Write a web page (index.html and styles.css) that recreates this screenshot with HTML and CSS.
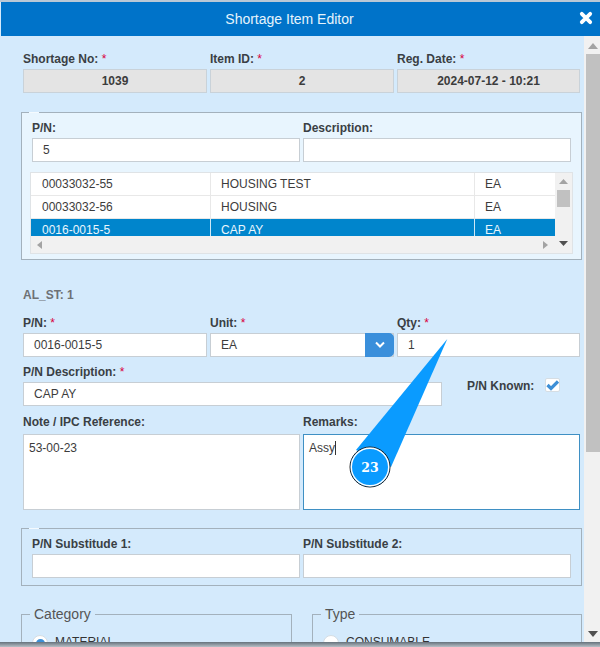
FILE: index.html
```html
<!DOCTYPE html>
<html lang="en">
<head>
<meta charset="utf-8">
<title>Shortage Item Editor</title>
<link rel="stylesheet" href="styles.css">
</head>
<body>
<div class="window">
  <header class="titlebar">
    <h1 class="title">Shortage Item Editor</h1>
    <svg class="close" width="16" height="16" viewBox="0 0 16 16"><path d="M3.800 3.800 L12.200 12.200 M12.200 3.800 L3.800 12.200" stroke="#fff" stroke-width="3.800" stroke-linecap="round"/></svg>
  </header>
  <div class="main">
    <div class="content">
      <div class="row row-three">
        <div><div class="label">Shortage No: <span class="req">*</span></div><div class="input readonly">1039</div></div>
        <div><div class="label">Item ID: <span class="req">*</span></div><div class="input readonly">2</div></div>
        <div><div class="label">Reg. Date: <span class="req">*</span></div><div class="input readonly">2024-07-12 - 10:21</div></div>
      </div>

      <section class="box box-light">
        <div class="row row-two">
          <div><div class="label">P/N:</div><div class="input">5</div></div>
          <div><div class="label">Description:</div><div class="input"></div></div>
        </div>
        <div class="table">
          <div class="table-body">
            <div class="rows">
              <div class="tr"><div class="td">00033032-55</div><div class="td">HOUSING TEST</div><div class="td">EA</div></div>
              <div class="tr"><div class="td">00033032-56</div><div class="td">HOUSING</div><div class="td">EA</div></div>
              <div class="tr tr-selected"><div class="td">0016-0015-5</div><div class="td">CAP AY</div><div class="td">EA</div></div>
            </div>
            <div class="hbar">
              <svg width="6" height="8" viewBox="0 0 6 8"><path d="M5 0V8L0 4Z" fill="#a3a3a3"/></svg>
              <svg width="6" height="8" viewBox="0 0 6 8"><path d="M0 0V8L5 4Z" fill="#a3a3a3"/></svg>
            </div>
          </div>
          <div class="vbar">
            <svg class="arrow-up" width="9" height="5" viewBox="0 0 9 5"><path d="M0 5H9L4.500 0Z" fill="#a3a3a3"/></svg>
            <div class="vthumb"></div>
            <svg class="arrow-down" width="9" height="5" viewBox="0 0 9 5"><path d="M0 0H9L4.500 5Z" fill="#505050"/></svg>
          </div>
        </div>
      </section>

      <div class="status">AL_ST: 1</div>

      <div class="row row-three row-pn">
        <div><div class="label">P/N: <span class="req">*</span></div><div class="input">0016-0015-5</div></div>
        <div><div class="label">Unit: <span class="req">*</span></div>
          <div class="input select"><span class="select-text">EA</span><span class="select-btn"><svg width="12" height="8" viewBox="0 0 12 8"><path d="M2 1.500 L6 5.500 L10 1.500" fill="none" stroke="#fff" stroke-width="2"/></svg></span></div>
        </div>
        <div><div class="label">Qty: <span class="req">*</span></div><div class="input">1</div></div>
      </div>

      <div class="row row-desc">
        <div class="desc-field"><div class="label">P/N Description: <span class="req">*</span></div><div class="input">CAP AY</div></div>
        <div class="known">
          <span class="label known-label">P/N Known:</span>
          <span class="checkbox"><svg width="13" height="11" viewBox="0 0 13 11"><path d="M1.500 5 L5 8.500 L12 1.500" fill="none" stroke="#3d8fd6" stroke-width="3.200"/></svg></span>
        </div>
      </div>

      <div class="row row-notes">
        <div><div class="label label-gap">Note / IPC Reference:</div><div class="input area">53-00-23</div></div>
        <div><div class="label label-gap">Remarks:</div><div class="input area area-focus"><span class="caret">Assy</span></div></div>
      </div>

      <section class="box box-sub">
        <div class="row row-two">
          <div><div class="label">P/N Substitude 1:</div><div class="input"></div></div>
          <div><div class="label">P/N Substitude 2:</div><div class="input"></div></div>
        </div>
      </section>

      <div class="groups">
        <fieldset class="group">
          <legend>Category</legend>
          <div class="radio-line"><span class="radio radio-on"></span><span class="radio-text">MATERIAL</span></div>
        </fieldset>
        <fieldset class="group">
          <legend>Type</legend>
          <div class="radio-line"><span class="radio"></span><span class="radio-text">CONSUMABLE</span></div>
        </fieldset>
      </div>
    </div>
    <div class="scrollbar">
      <svg class="sb-up" width="10" height="6" viewBox="0 0 10 6"><path d="M0 6H10L5 0Z" fill="#a3a3a3"/></svg>
      <div class="sb-thumb"></div>
      <svg class="sb-down" width="10" height="6" viewBox="0 0 10 6"><path d="M0 0H10L5 6Z" fill="#505050"/></svg>
    </div>
  </div>
  <div class="bottom-edge"></div>
  <svg class="callout" width="130" height="160" viewBox="340 330 130 160">
    <path d="M447.300 339 L356 450 L391 467 Z" fill="#0a9bff"/>
    <circle cx="370" cy="467" r="20" fill="#0a9bff" stroke="#222" stroke-width="1"/>
    <circle cx="370" cy="467" r="18.700" fill="#0a9bff" stroke="#fff" stroke-width="1.400"/>
    <text x="370" y="472" class="callout-text" text-anchor="middle">23</text>
  </svg>
</div>
</body>
</html>
```

FILE: styles.css
```css
* { box-sizing: border-box; }
html, body { margin: 0; height: 100%; overflow: hidden; }
body { font: 12px/16px "Liberation Sans", Arial, sans-serif; color: #333; background: #d4eafc; }

.window { position: relative; height: 647px; display: flex; flex-direction: column; padding-top: 2px; background: #d4eafc; box-shadow: inset 0 2px 0 #b9c8d6; }

.titlebar { height: 34px; margin-left: 1px; padding-right: 22px; flex: none; display: flex; align-items: center; justify-content: center; position: relative; background: #0073c9; }
.title { margin: 0; font-size: 14px; font-weight: normal; color: #e6f3fc; }
.close { position: absolute; right: 6px; top: 8px; }

.main { flex: 1; min-height: 0; display: flex; margin-left: 1px; }
.content { flex: 1; min-width: 0; overflow: hidden; padding: 15px 2px 0 20px; background: #d4eafc; }

.row { display: grid; }
.row-three { grid-template-columns: 184px 184px 183px; column-gap: 3px; margin: 0 2px; }
.row-two { grid-template-columns: 268px 268px; column-gap: 3px; }
.row-notes { grid-template-columns: 277px 277px; column-gap: 3px; margin: 8px 2px 0; }
.row-pn { margin-top: 12px; }
.row-desc { display: flex; margin: 7px 2px 0; }
.desc-field { width: 419px; }

.label { height: 16px; margin-bottom: 2px; font-weight: bold; color: #3a3f44; white-space: nowrap; }
.label-gap { margin-bottom: 4px; }
.req { color: #d9003d; font-weight: normal; }

.input { height: 24px; padding: 0 10px; line-height: 22px; background: #fff; border: 1px solid #c7ced4; color: #3c3c3c; white-space: nowrap; }
.readonly { background: #e4e4e4; border-color: #c9d2d9; text-align: center; font-weight: bold; }

.select { display: flex; padding-right: 0; }
.select-text { flex: 1; }
.select-btn { width: 29px; margin: -1px -1px -1px 0; display: flex; align-items: center; justify-content: center; background: #3a8fdb; border-radius: 0 5px 5px 0; }

.area { height: 76px; padding: 5px; line-height: 16px; }
.area-focus { border-color: #3f90c4; }
.caret { border-right: 1px solid #333; }

.box { position: relative; border: 1px solid #a3b1bc; padding: 7px 10px 5px; margin-top: 19px; }
.box::before { content: ""; position: absolute; left: 7px; top: -1px; width: 10px; height: 1px; background: #f4fafe; }
.box-light { background: #e8f5fe; }
.box-sub { padding-bottom: 7px; margin-top: 18px; }

.table { display: flex; height: 82px; margin: 10px -2px 0; border: 1px solid #dfe3e6; background: #f1f1f1; }
.table-body { flex: 1; min-width: 0; display: flex; flex-direction: column; }
.rows { height: 63px; overflow: hidden; background: #fff; }
.tr { display: grid; grid-template-columns: 179px 264px 81px; height: 23px; border-bottom: 1px solid #e8e8e8; }
.td { padding-left: 10px; line-height: 22px; color: #3c3c3c; border-left: 1px solid #e8e8e8; white-space: nowrap; }
.td:first-child { border-left: 0; padding-left: 11px; }
.tr-selected { background: #0085cc; border-bottom: 0; }
.tr-selected .td { color: #eaf6fd; border-left-color: #cfe8f6; }
.hbar { flex: 1; display: flex; align-items: center; justify-content: space-between; padding: 0 6px; background: #f1f1f1; }
.vbar { width: 17px; flex: none; display: flex; flex-direction: column; align-items: center; padding-top: 6px; background: #f1f1f1; }
.arrow-up { flex: none; }
.vthumb { width: 13px; height: 17px; margin-top: 6px; background: #c1c1c1; }
.arrow-down { margin-top: 34px; }

.status { height: 16px; margin: 27px 2px 0 2px; font-weight: bold; color: #6d7175; }

.known { display: flex; align-items: center; margin: 13px 0 0 25px; height: 16px; }
.known-label { margin: 2px 11px 0 0; }
.checkbox { width: 15px; height: 14px; display: flex; align-items: center; justify-content: center; background: #fff; border: 1px solid #d5dde3; border-radius: 2px; }

.groups { display: grid; grid-template-columns: 271px 270px; column-gap: 20px; margin-top: 20px; }
.group { margin: 0; min-width: 0; height: 80px; padding: 13px 8px 0 10px; border: 1px solid #a3b1bc; }
.group legend { padding: 0 4px; margin-left: -2px; font-size: 14px; line-height: 16px; color: #555; }
.radio-line { display: flex; align-items: flex-start; gap: 7px; white-space: nowrap; color: #333; }
.radio-text { margin-top: -1px; }
.radio { width: 16px; height: 16px; flex: none; border-radius: 50%; background: #fff; border: 1px solid #d5dde3; display: flex; align-items: center; justify-content: center; }
.radio-on::after { content: ""; width: 9px; height: 9px; border-radius: 50%; background: #3d8fd6; }

.scrollbar { width: 16px; flex: none; display: flex; flex-direction: column; align-items: center; padding: 7px 0 5px 2px; background: #f1f1f1; }
.sb-thumb { width: 14px; height: 398px; margin-top: 5px; background: #c1c1c1; }
.sb-down { margin-top: auto; }

.bottom-edge { height: 5px; flex: none; background: linear-gradient(#66727c, #b7bfc6); }

.callout { position: absolute; left: 340px; top: 330px; }
.callout-text { font: bold 12.500px "DejaVu Serif", serif; fill: #fff; }
```
